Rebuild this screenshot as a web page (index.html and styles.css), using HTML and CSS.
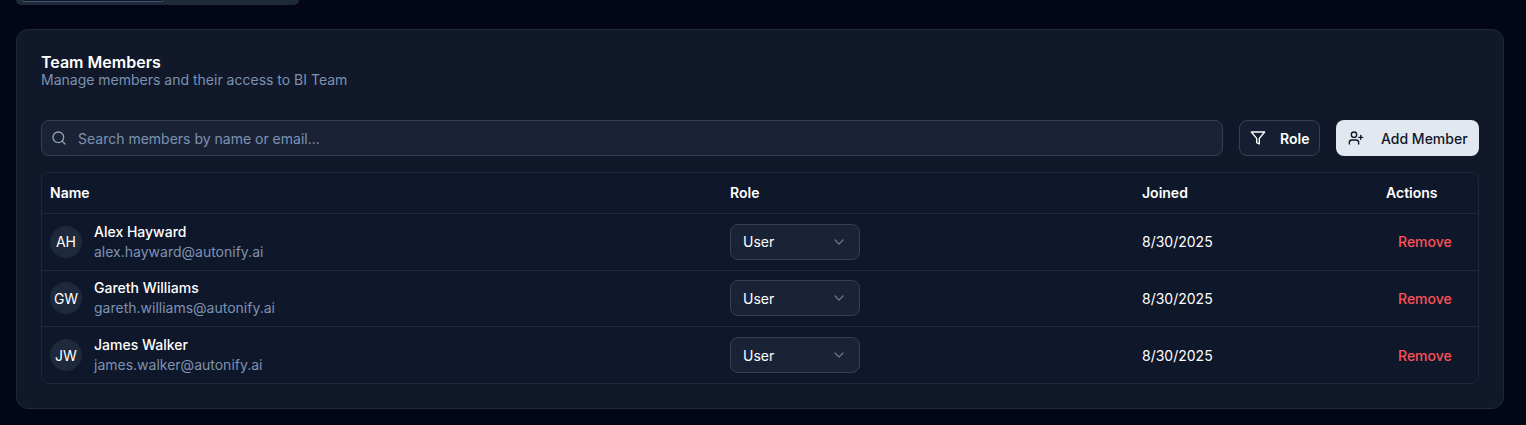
FILE: index.html
```html
<!DOCTYPE html>
<html lang="en">
<head>
<meta charset="utf-8">
<title>Team Members</title>
<link rel="stylesheet" href="styles.css">
</head>
<body>
<div class="tabs"><div class="tab-active"></div></div>
<section class="card">
  <header class="card-head">
    <h2 class="card-title">Team Members</h2>
    <p class="card-sub">Manage members and their access to BI Team</p>
  </header>
  <div class="toolbar">
    <label class="search">
      <svg class="icon search-icon" viewBox="0 0 24 24"><circle cx="11" cy="11" r="8"/><path d="m21 21-4.3-4.3"/></svg>
      <input class="search-input" type="text" placeholder="Search members by name or email...">
    </label>
    <button class="btn btn-outline">
      <svg class="icon" viewBox="0 0 24 24"><path d="M22 3H2l8 9.46V19l4 2v-8.54L22 3z"/></svg>
      <span>Role</span>
    </button>
    <button class="btn btn-primary">
      <svg class="icon" viewBox="0 0 24 24"><path d="M16 21v-2a4 4 0 0 0-4-4H6a4 4 0 0 0-4 4v2"/><circle cx="9" cy="7" r="4"/><path d="M19 8v6"/><path d="M22 11h-6"/></svg>
      <span>Add Member</span>
    </button>
  </div>
  <div class="table-wrap">
    <table class="table">
      <colgroup><col class="c-name"><col class="c-role"><col class="c-joined"><col class="c-actions"></colgroup>
      <thead>
        <tr><th>Name</th><th>Role</th><th>Joined</th><th>Actions</th></tr>
      </thead>
      <tbody>
        <tr>
          <td><div class="member"><span class="avatar">AH</span><div><div class="m-name">Alex Hayward</div><div class="m-mail">alex.hayward@autonify.ai</div></div></div></td>
          <td><div class="select"><span>User</span><svg class="chev" viewBox="0 0 24 24"><path d="m6 9 6 6 6-6"/></svg></div></td>
          <td>8/30/2025</td>
          <td><button class="remove">Remove</button></td>
        </tr>
        <tr>
          <td><div class="member"><span class="avatar">GW</span><div><div class="m-name">Gareth Williams</div><div class="m-mail">gareth.williams@autonify.ai</div></div></div></td>
          <td><div class="select"><span>User</span><svg class="chev" viewBox="0 0 24 24"><path d="m6 9 6 6 6-6"/></svg></div></td>
          <td>8/30/2025</td>
          <td><button class="remove">Remove</button></td>
        </tr>
        <tr>
          <td><div class="member"><span class="avatar">JW</span><div><div class="m-name">James Walker</div><div class="m-mail">james.walker@autonify.ai</div></div></div></td>
          <td><div class="select"><span>User</span><svg class="chev" viewBox="0 0 24 24"><path d="m6 9 6 6 6-6"/></svg></div></td>
          <td>8/30/2025</td>
          <td><button class="remove">Remove</button></td>
        </tr>
      </tbody>
    </table>
  </div>
</section>
</body>
</html>
```
FILE: styles.css
```css
* { box-sizing: border-box; }
html, body { margin: 0; height: 100%; }
body {
  background: #020617;
  color: #ffffff;
  font-family: Inter, "Liberation Sans", sans-serif;
  font-size: 14px;
  padding: 0 22px 0 16px;
  overflow: hidden;
}
.tabs {
  width: 283px;
  height: 5px;
  background: #1e293b;
  border-radius: 0 0 8px 8px;
  padding-left: 6px;
  margin-bottom: 24px;
}
.tab-active {
  width: 141px;
  height: 2px;
  background: #0f172a;
  border: 1px solid #475569;
  border-top: 0;
  border-radius: 0 0 5px 5px;
}
.card {
  background: #10182a;
  border: 1px solid #1e293b;
  border-radius: 12px;
  padding: 24px;
  height: 380px;
}
.card-head { height: 66px; }
.card-title {
  margin: 0;
  font-size: 16px;
  font-weight: 600;
  line-height: 16px;
}
.card-sub {
  margin: 0;
  color: #7d92b0;
  font-size: 14px;
  line-height: 20px;
}
.toolbar { display: flex; gap: 16px; height: 36px; margin-bottom: 16px; }
.icon {
  width: 16px; height: 16px; flex: none;
  fill: none; stroke: currentColor; stroke-width: 2;
  stroke-linecap: round; stroke-linejoin: round;
}
.search {
  flex: 1;
  display: flex;
  align-items: center;
  gap: 10px;
  padding: 0 9px;
  background: #1a2336;
  border: 1px solid #334155;
  border-radius: 8px;
}
.search-icon { color: #94a3b8; }
.search-input {
  flex: 1;
  background: none;
  border: 0;
  outline: 0;
  padding: 0 0 0 1px;
  font: 14px Inter, "Liberation Sans", sans-serif;
  color: #f8fafc;
}
.search-input::placeholder { color: #7d92b0; opacity: 1; }
.btn {
  display: flex;
  align-items: center;
  gap: 14px;
  height: 36px;
  border-radius: 8px;
  font: 500 14px Inter, "Liberation Sans", sans-serif;
  padding: 0 10px;
  white-space: nowrap;
}
.btn-outline {
  width: 81px;
  background: #161f32;
  border: 1px solid #334155;
  color: #ffffff;
  font-weight: 600;
}
.btn-primary {
  width: 143px;
  background: #e2e8f0;
  border: 0;
  color: #0f172a;
  padding: 0 12px;
  gap: 17px;
}
.table-wrap {
  background: #0f172a;
  border: 1px solid #1e293b;
  border-radius: 8px;
  overflow: hidden;
}
.table { width: 100%; border-collapse: separate; border-spacing: 0; table-layout: fixed; font-size: 14px; }
.c-name { width: 680px; }
.c-role { width: 412px; }
.c-joined { width: 244px; }
.c-actions { width: 100px; }
.table th {
  height: 41px;
  padding: 0 8px 1px;
  text-align: left;
  font-weight: 600;
  border-bottom: 1px solid #1e293b;
}
.table td { height: 56.5px; padding: 0 8px; font-weight: 400; border-bottom: 1px solid #1e293b; }
.table tbody tr:last-child td { height: 56px; border-bottom: 0; }
.member { display: flex; align-items: center; gap: 12px; }
.avatar {
  width: 32px; height: 32px; flex: none;
  border-radius: 50%;
  background: #1e293b;
  display: flex; align-items: center; justify-content: center;
  font-weight: 400;
}
.m-name { line-height: 20px; font-weight: 500; }
.m-mail { line-height: 20px; color: #7d92b0; font-weight: 400; }
.select {
  width: 130px; height: 36px;
  display: flex; align-items: center; justify-content: space-between;
  padding: 0 12px;
  background: #1a2336;
  border: 1px solid #334155;
  border-radius: 8px;
}
.chev {
  width: 16px; height: 16px;
  fill: none; stroke: #64748b; stroke-width: 2;
  stroke-linecap: round; stroke-linejoin: round;
}
.remove {
  background: none;
  border: 0;
  padding: 0 12px;
  color: #ff5058;
  font: 500 14px Inter, "Liberation Sans", sans-serif;
}
```
